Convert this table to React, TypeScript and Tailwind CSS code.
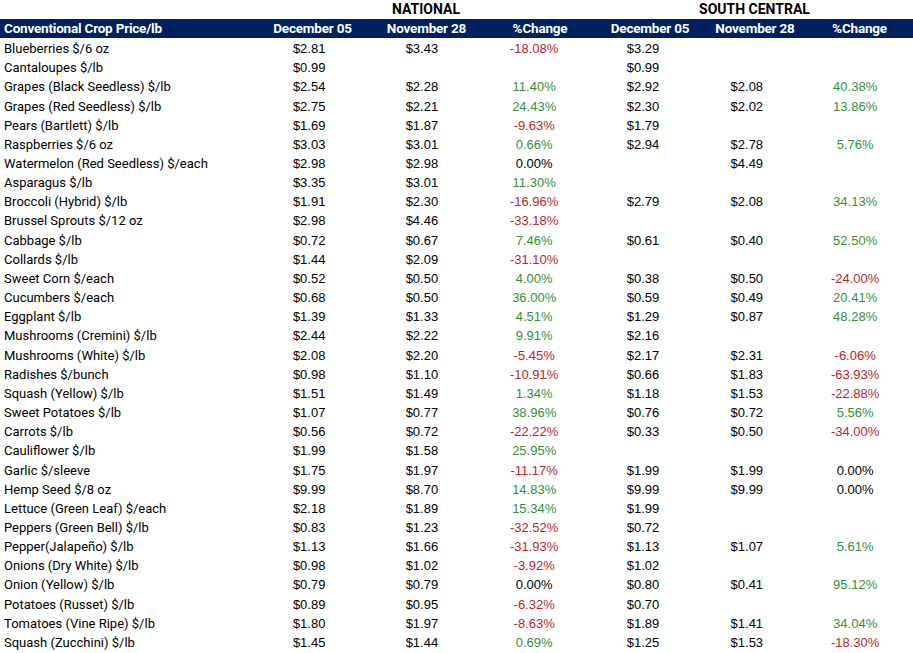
import React from "react";

type Row = [string, string, string, string, string, string, string];

const rows: Row[] = [
  ["Blueberries $/6 oz", "$2.81", "$3.43", "-18.08%", "$3.29", "", ""],
  ["Cantaloupes $/lb", "$0.99", "", "", "$0.99", "", ""],
  ["Grapes (Black Seedless) $/lb", "$2.54", "$2.28", "11.40%", "$2.92", "$2.08", "40.38%"],
  ["Grapes (Red Seedless) $/lb", "$2.75", "$2.21", "24.43%", "$2.30", "$2.02", "13.86%"],
  ["Pears (Bartlett) $/lb", "$1.69", "$1.87", "-9.63%", "$1.79", "", ""],
  ["Raspberries $/6 oz", "$3.03", "$3.01", "0.66%", "$2.94", "$2.78", "5.76%"],
  ["Watermelon (Red Seedless) $/each", "$2.98", "$2.98", "0.00%", "", "$4.49", ""],
  ["Asparagus $/lb", "$3.35", "$3.01", "11.30%", "", "", ""],
  ["Broccoli (Hybrid) $/lb", "$1.91", "$2.30", "-16.96%", "$2.79", "$2.08", "34.13%"],
  ["Brussel Sprouts $/12 oz", "$2.98", "$4.46", "-33.18%", "", "", ""],
  ["Cabbage $/lb", "$0.72", "$0.67", "7.46%", "$0.61", "$0.40", "52.50%"],
  ["Collards $/lb", "$1.44", "$2.09", "-31.10%", "", "", ""],
  ["Sweet Corn $/each", "$0.52", "$0.50", "4.00%", "$0.38", "$0.50", "-24.00%"],
  ["Cucumbers $/each", "$0.68", "$0.50", "36.00%", "$0.59", "$0.49", "20.41%"],
  ["Eggplant $/lb", "$1.39", "$1.33", "4.51%", "$1.29", "$0.87", "48.28%"],
  ["Mushrooms (Cremini) $/lb", "$2.44", "$2.22", "9.91%", "$2.16", "", ""],
  ["Mushrooms (White) $/lb", "$2.08", "$2.20", "-5.45%", "$2.17", "$2.31", "-6.06%"],
  ["Radishes $/bunch", "$0.98", "$1.10", "-10.91%", "$0.66", "$1.83", "-63.93%"],
  ["Squash (Yellow) $/lb", "$1.51", "$1.49", "1.34%", "$1.18", "$1.53", "-22.88%"],
  ["Sweet Potatoes $/lb", "$1.07", "$0.77", "38.96%", "$0.76", "$0.72", "5.56%"],
  ["Carrots $/lb", "$0.56", "$0.72", "-22.22%", "$0.33", "$0.50", "-34.00%"],
  ["Cauliflower $/lb", "$1.99", "$1.58", "25.95%", "", "", ""],
  ["Garlic $/sleeve", "$1.75", "$1.97", "-11.17%", "$1.99", "$1.99", "0.00%"],
  ["Hemp Seed $/8 oz", "$9.99", "$8.70", "14.83%", "$9.99", "$9.99", "0.00%"],
  ["Lettuce (Green Leaf) $/each", "$2.18", "$1.89", "15.34%", "$1.99", "", ""],
  ["Peppers (Green Bell) $/lb", "$0.83", "$1.23", "-32.52%", "$0.72", "", ""],
  ["Pepper(Jalapeño) $/lb", "$1.13", "$1.66", "-31.93%", "$1.13", "$1.07", "5.61%"],
  ["Onions (Dry White) $/lb", "$0.98", "$1.02", "-3.92%", "$1.02", "", ""],
  ["Onion (Yellow) $/lb", "$0.79", "$0.79", "0.00%", "$0.80", "$0.41", "95.12%"],
  ["Potatoes (Russet) $/lb", "$0.89", "$0.95", "-6.32%", "$0.70", "", ""],
  ["Tomatoes (Vine Ripe) $/lb", "$1.80", "$1.97", "-8.63%", "$1.89", "$1.41", "34.04%"],
  ["Squash (Zucchini) $/lb", "$1.45", "$1.44", "0.69%", "$1.25", "$1.53", "-18.30%"],
];

function pctClass(v: string) {
  if (!v) return "";
  if (v === "0.00%") return "text-black";
  if (v.startsWith("-")) return "text-[#b8262c]";
  return "text-[#36903a]";
}

const label = { fontFamily: "Roboto, 'Liberation Sans', sans-serif" };
const num = { fontFamily: "'Liberation Sans', Arial, sans-serif" };

export default function App() {
  return (
    <div className="w-[913px] h-[653px] bg-white overflow-hidden text-black">
      {/* Region row */}
      <div className="flex h-[19px] items-center font-bold text-[14px]" style={label}>
        <div className="w-[256px]" />
        <div className="w-[340px] text-center">NATIONAL</div>
        <div className="w-[317px] text-center">SOUTH CENTRAL</div>
      </div>
      {/* Header row */}
      <div
        className="flex h-[19px] items-center bg-[#002060] text-white font-bold text-[13.5px] tracking-[-0.2px]"
        style={label}
      >
        <div className="w-[256px] pl-[4px]">Conventional Crop Price/lb</div>
        <div className="w-[113px] text-center">December 05</div>
        <div className="w-[115px] text-center">November 28</div>
        <div className="w-[112px] text-center">%Change</div>
        <div className="w-[108px] text-center">December 05</div>
        <div className="w-[102px] text-center">November 28</div>
        <div className="w-[107px] text-center">%Change</div>
      </div>
      <div className="pt-[1px]">
        {rows.map((r, i) => (
          <div key={i} className="flex h-[19.16px] items-center text-[13px] leading-none">
            <div className="w-[256px] pl-[4px] text-[13px]" style={label}>
              {r[0]}
            </div>
            <div className="w-[113px] text-center" style={num}>{r[1]}</div>
            <div className="w-[115px] text-center" style={num}>{r[2]}</div>
            <div className={"w-[112px] text-center " + pctClass(r[3])} style={num}>{r[3]}</div>
            <div className="w-[108px] text-center" style={num}>{r[4]}</div>
            <div className="w-[102px] text-center" style={num}>{r[5]}</div>
            <div className={"w-[117px] text-center " + pctClass(r[6])} style={num}>{r[6]}</div>
          </div>
        ))}
      </div>
    </div>
  );
}
